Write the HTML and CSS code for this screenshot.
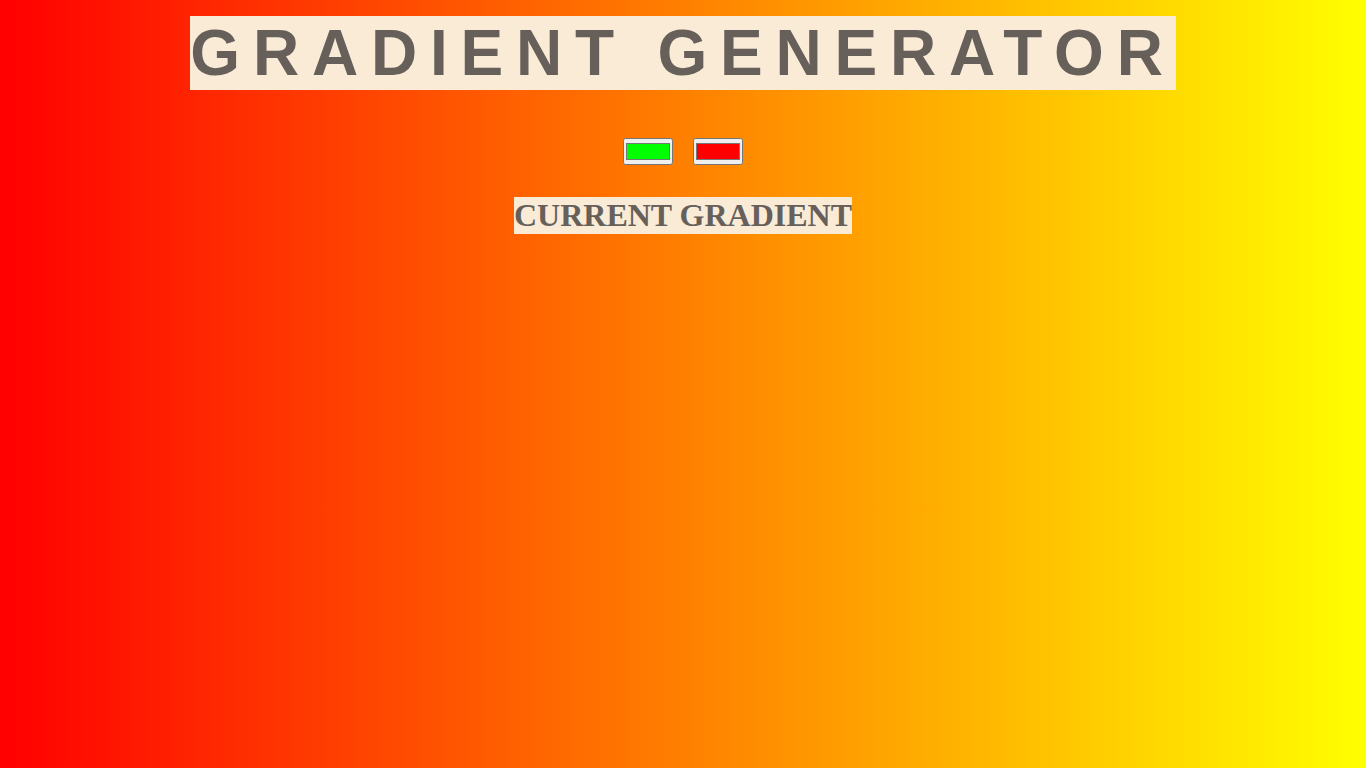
FILE: index.html
```html
<!DOCTYPE html>
<html>
<head>
<meta charset="utf-8">
<title>Gradient Generator</title>
<link rel="stylesheet" href="styles.css">
</head>
<body>
<main class="page">
  <h1 class="title">GRADIENT GENERATOR</h1>
  <div class="pickers">
    <input class="picker" type="color" value="#00ff00">
    <input class="picker" type="color" value="#ff0000">
  </div>
  <h2 class="current">CURRENT GRADIENT</h2>
</main>
</body>
</html>
```
FILE: styles.css
```css
html, body {
  margin: 0;
  height: 100%;
}
body {
  background: linear-gradient(to right, #ff0000, #ffff00);
  color: #67605a;
}
.page {
  display: flex;
  flex-direction: column;
  align-items: center;
  padding-top: 16px;
}
.title {
  margin: 0;
  font-family: "Liberation Sans", Arial, sans-serif;
  font-weight: bold;
  font-size: 64px;
  line-height: 74px;
  letter-spacing: 12.8px;
  background: #faebd7;
  color: #67605a;
}
.pickers {
  display: flex;
  gap: 20px;
  margin-top: 48px;
}
.picker {
  width: 50px;
  height: 27px;
  margin: 0;
  padding: 0;
}
.current {
  margin: 32px 0 0;
  font-family: "Liberation Serif", "Times New Roman", serif;
  font-weight: bold;
  font-size: 32px;
  line-height: 37px;
  background: #faebd7;
  color: #67605a;
}
```
